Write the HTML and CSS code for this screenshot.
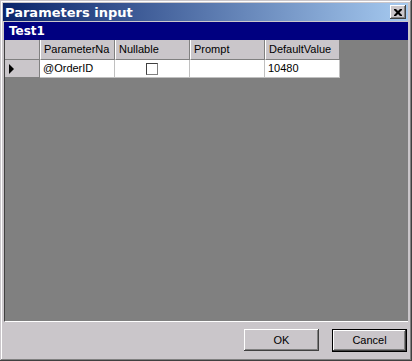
FILE: index.html
```html
<!DOCTYPE html>
<html lang="en">
<head>
  <meta charset="utf-8">
  <title>Parameters input</title>
  <link rel="stylesheet" href="styles.css">
</head>
<body>
  <div class="window">
    <div class="titlebar">
      <span class="title">Parameters input</span>
      <span class="close">
        <svg width="8" height="7" viewBox="0 0 8 7"><path d="M0 0h2l2 2 2-2h2v1l-2.5 2.5L8 6v1H6L4 5 2 7H0V6l2.5-2.5L0 1z" fill="#000"/></svg>
      </span>
    </div>
    <div class="content">
      <div class="caption">Test1</div>
      <div class="gridarea">
        <div class="grid">
          <div class="hcell corner"></div>
          <div class="hcell">ParameterNa</div>
          <div class="hcell">Nullable</div>
          <div class="hcell">Prompt</div>
          <div class="hcell">DefaultValue</div>
          <div class="rowhead"><span class="arrow"></span></div>
          <div class="cell">@OrderID</div>
          <div class="cell center"><span class="check"></span></div>
          <div class="cell"></div>
          <div class="cell">10480</div>
        </div>
      </div>
    </div>
    <div class="buttons">
      <button class="btn">OK</button>
      <button class="btn default">Cancel</button>
    </div>
  </div>
</body>
</html>
```

FILE: styles.css
```css
body {
  margin: 0;
  font-family: "Liberation Sans", Arial, sans-serif;
  font-size: 11px;
}
.window {
  width: 412px;
  height: 361px;
  box-sizing: border-box;
  padding: 3px 4px 3px 3px;
  background: #cac6ca;
  box-shadow: inset -1px -1px #404040, inset 1px 1px #cac6ca, inset -2px -2px #808080, inset 2px 2px #fff;
  display: flex;
  flex-direction: column;
}
.titlebar {
  height: 18px;
  background: linear-gradient(to right, #0a246a, #a6caf0);
  display: flex;
  align-items: center;
  justify-content: space-between;
  padding: 0 2px 0 2px;
  flex-shrink: 0;
}
.title {
  color: #fff;
  font-family: "DejaVu Sans", sans-serif;
  font-weight: bold;
  font-size: 13px;
}
.close {
  width: 16px;
  height: 14px;
  box-sizing: border-box;
  background: #cac6ca;
  box-shadow: inset -1px -1px #404040, inset 1px 1px #fff, inset -2px -2px #808080;
  display: flex;
  align-items: center;
  justify-content: center;
}
.content {
  margin-top: 1px;
  margin-left: 1px;
  flex: 1;
  display: flex;
  flex-direction: column;
  border-top: 1px solid #fff;
}
.caption {
  height: 18px;
  background: #000080;
  color: #fff;
  font-family: "DejaVu Sans", sans-serif;
  font-weight: bold;
  font-size: 12px;
  line-height: 18px;
  padding-left: 5px;
  margin-top: -1px;
}
.gridarea {
  flex: 1;
  background: #808080;
  border-left: 1px solid #404040;
  border-bottom: 1px solid #fff;
}
.grid {
  display: grid;
  grid-template-columns: 35px 75px 75px 75px 75px;
  grid-template-rows: 20px 18px;
}
.hcell {
  background: #cac6ca;
  border-left: 1px solid #fff;
  border-right: 1px solid #808080;
  border-bottom: 1px solid #808080;
  padding: 0 3px;
  line-height: 19px;
  white-space: nowrap;
  overflow: hidden;
}
.corner {
  border-left: none;
}
.rowhead {
  background: #cac6ca;
  border-right: 1px solid #808080;
  border-bottom: 1px solid #808080;
  display: flex;
  align-items: center;
  padding-left: 4px;
}
.arrow {
  width: 0;
  height: 0;
  border-top: 5px solid transparent;
  border-bottom: 5px solid transparent;
  border-left: 5px solid #000;
}
.cell {
  background: #fff;
  border-right: 1px solid #c0c0c0;
  border-bottom: 1px solid #c0c0c0;
  padding: 0 3px;
  line-height: 17px;
}
.center {
  display: flex;
  justify-content: center;
  align-items: center;
}
.check {
  width: 12px;
  height: 12px;
  box-sizing: border-box;
  border-top: 1px solid #404040;
  border-left: 1px solid #404040;
  border-right: 1px solid #808080;
  border-bottom: 1px solid #808080;
  background: #fff;
}
.buttons {
  height: 36px;
  flex-shrink: 0;
  display: flex;
  justify-content: flex-end;
  align-items: center;
  gap: 13px;
  padding-right: 1px;
}
.btn {
  width: 75px;
  height: 22px;
  background: #cac6ca;
  border: none;
  font-family: "Liberation Sans", Arial, sans-serif;
  font-size: 11px;
  color: #000;
  box-shadow: inset -1px -1px #404040, inset 1px 1px #fff, inset -2px -2px #808080;
}
.default {
  height: 23px;
  border: 1px solid #000;
}
```
